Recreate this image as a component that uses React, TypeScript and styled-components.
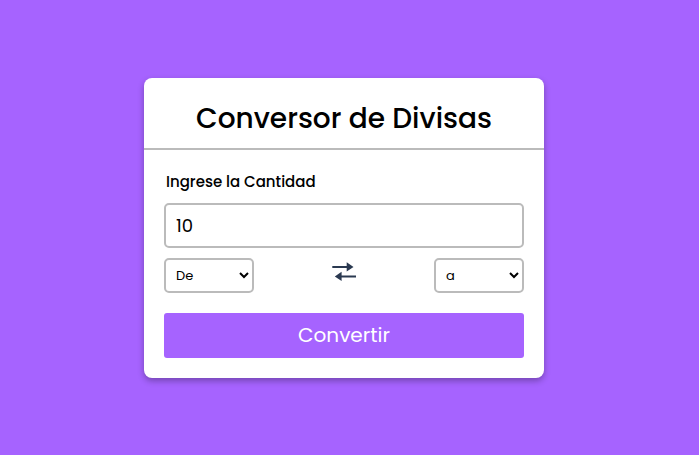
import React from "react";
import styled, { createGlobalStyle } from "styled-components";

const GlobalStyle = createGlobalStyle`
  *, *::before, *::after { box-sizing: border-box; }
  body {
    margin: 0;
    background: #a663ff;
    color: #000;
    font-family: Poppins, Inter, "Open Sans", sans-serif;
  }
`;

const Page = styled.main`
  min-height: 100vh;
  display: flex;
  align-items: center;
  justify-content: center;
  padding: 16px 27px 16px 16px;
`;

const Card = styled.form`
  width: 100%;
  max-width: 400px;
  background: #fff;
  border-radius: 8px;
  box-shadow: 0 3px 6px rgba(0, 0, 0, 0.3);
`;

const Title = styled.h1`
  margin: 0;
  padding: 20px 20px 8px;
  border-bottom: 2px solid #bbb;
  font-size: 28px;
  line-height: 42px;
  font-weight: 500;
  text-align: center;
`;

const Body = styled.div`
  display: flex;
  flex-direction: column;
  padding: 20px;
`;

const Label = styled.label`
  padding: 0 2px;
  margin-bottom: 10px;
  font-size: 15px;
  line-height: 23px;
  font-weight: 500;
`;

const Amount = styled.input`
  width: 100%;
  height: 45px;
  padding: 0 10px;
  border: 2px solid #bbb;
  border-radius: 5px;
  background: #fff;
  color: #000;
  font: inherit;
  font-size: 18px;
`;

const Row = styled.div`
  display: flex;
  justify-content: space-between;
  margin: 10px 0 20px;
`;

const Currency = styled.select`
  width: 90px;
  height: 35px;
  padding: 0 0 0 6px;
  border: 2px solid #bbb;
  border-radius: 5px;
  background: #fff;
  color: #000;
  font: inherit;
  font-size: 13px;
`;

const Submit = styled.button`
  height: 45px;
  padding: 0 0 1px;
  border: 0;
  border-radius: 3px;
  background: #a663ff;
  color: #fff;
  font: inherit;
  font-size: 20px;
  cursor: pointer;
`;

const SwapIcon = () => (
  <svg width="26" height="26" viewBox="0 0 26 26" fill="#2a3950" aria-hidden="true">
    <path d="M1.3 7.9h14.4V4.3l6.8 4.6-6.8 4.6V10H1.3z" />
    <path d="M25 17.4H10.6v-3.6l-6.8 4.6 6.8 4.6v-3.5H25z" />
  </svg>
);

export default function App() {
  return (
    <>
      <GlobalStyle />
      <Page>
        <Card onSubmit={(e) => e.preventDefault()}>
          <Title>Conversor de Divisas</Title>
          <Body>
            <Label htmlFor="amount">Ingrese la Cantidad</Label>
            <Amount id="amount" type="text" inputMode="decimal" defaultValue="10" />
            <Row>
              <Currency aria-label="De">
                <option>De</option>
              </Currency>
              <SwapIcon />
              <Currency aria-label="a">
                <option>a</option>
              </Currency>
            </Row>
            <Submit type="submit">Convertir</Submit>
          </Body>
        </Card>
      </Page>
    </>
  );
}
